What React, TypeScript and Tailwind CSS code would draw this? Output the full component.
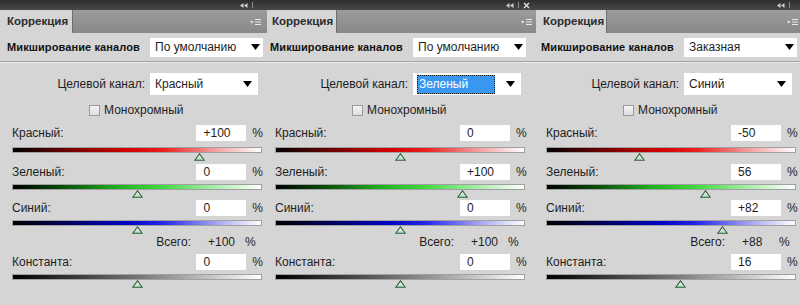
import React from "react";

type Kind = "red" | "green" | "blue" | "gray";

type PanelProps = {
  width: string;
  tabShift: string;
  preset: string;
  target: string;
  highlight?: boolean;
  red: number;
  green: number;
  blue: number;
  labels: [string, string, string, string];
  total: string;
  constant: number;
  close?: boolean;
};

const tracks: Record<Kind, string> = {
  red: "bg-[linear-gradient(to_right,#000_0%,#6e0000_22%,#cc0000_44%,#ea1c1c_60%,#f3a2a2_82%,#ffffff_100%)]",
  green: "bg-[linear-gradient(to_right,#000_0%,#0b560b_22%,#1eb01e_42%,#3fdb3f_60%,#b6efb6_84%,#ffffff_100%)]",
  blue: "bg-[linear-gradient(to_right,#000_0%,#00005c_22%,#0000c4_45%,#2222ea_60%,#b0b0f4_84%,#ffffff_100%)]",
  gray: "bg-[linear-gradient(to_right,#000_0%,#2e2e2e_20%,#747474_50%,#b8b8b8_75%,#ffffff_100%)]",
};

function Arrow() {
  return (
    <svg width="9" height="6" viewBox="0 0 9 6">
      <polygon points="0,0 9,0 4.5,6" fill="#000" />
    </svg>
  );
}

function Thumb({ value }: { value: number }) {
  // track spans 249px, range -200..200
  const left = ((value + 200) / 400) * 249 - 5;
  return (
    <div className="relative h-[8px] w-[250px]">
      <svg className="absolute top-0" style={{ left }} width="11" height="8" viewBox="0 0 11 8">
        <polygon points="5.5,0.8 10.2,7.3 0.8,7.3" fill="#d3ead6" stroke="#2f5a3c" strokeWidth="1.1" />
        <line x1="2.5" y1="6.3" x2="8.5" y2="6.3" stroke="#86c294" strokeWidth="1" />
      </svg>
    </div>
  );
}

function Track({ kind }: { kind: Kind }) {
  return <div className={`h-[6px] w-[250px] border border-[#a0a0a0] ${tracks[kind]}`} />;
}

function ValueRow({ label, value, mt }: { label: string; value: string; mt: string }) {
  return (
    <div className={`flex h-[16px] items-center ${mt}`}>
      <div className="w-[185px] text-[12px] text-[#1e1e1e]">{label}</div>
      <div className="flex h-[16px] w-[50px] items-center bg-white pl-[7px] text-[12px] text-[#1e1e1e]">{value}</div>
      <div className="ml-[6px] text-[12px] text-[#1e1e1e]">%</div>
    </div>
  );
}

function Panel(p: PanelProps) {
  return (
    <div className={`flex shrink-0 flex-col bg-[#d5d5d5] ${p.width}`}>
      <div className="flex h-[10px] items-center justify-end gap-[4px] bg-[linear-gradient(#2e2e2e,#484848)] pr-[2px]">
        <svg width="8" height="5" viewBox="0 0 8 5">
          <polygon points="0,2.5 3.5,0 3.5,5" fill="#cfcfcf" />
          <polygon points="4,2.5 7.5,0 7.5,5" fill="#cfcfcf" />
        </svg>
        <div className="h-[6px] w-px bg-[#8a8a8a]" />
        {p.close ? (
          <svg width="7" height="7" viewBox="0 0 7 7" className="mr-[2px]">
            <path d="M1 1 L6 6 M6 1 L1 6" stroke="#e0e0e0" strokeWidth="1.4" />
          </svg>
        ) : (
          <div className="w-[4px]" />
        )}
      </div>
      <div className="flex h-[23px] items-stretch bg-[linear-gradient(#9c9c9c,#888888)]">
        <div className={`flex items-center border-r border-[#6f6f6f] bg-[#d5d5d5] ${p.tabShift}`}>
          <span className="text-[11.5px] font-bold text-[#2b2b2b]">Коррекция</span>
        </div>
        <div className="flex flex-1 items-center justify-end pr-[2px]">
          <svg width="11" height="8" viewBox="0 0 11 8">
            <polygon points="0,3 3.5,3 1.75,5.5" fill="#e8e8e8" />
            <path d="M5 1.5 H11 M5 4 H11 M5 6.5 H11" stroke="#e8e8e8" strokeWidth="1" />
          </svg>
        </div>
      </div>
      <div className="flex h-[28px] items-center">
        <div className="w-[150px] pl-[7px] text-[11px] font-bold tracking-[0.1px] text-[#111]">Микширование каналов</div>
        <div className="flex h-[19px] w-[113px] items-center justify-between bg-white pl-[5px] pr-[3px] text-[12px] text-[#1e1e1e]">
          <span>{p.preset}</span>
          <Arrow />
        </div>
      </div>
      <div className="h-px bg-[#a2a2a2]" />
      <div className="h-px bg-[#ececec]" />

      <div className="mt-[10px] flex h-[22px] items-center">
        <div className="w-[147px] pr-[2px] text-right text-[12px] text-[#1e1e1e]">Целевой канал:</div>
        <div className="ml-[3px] flex h-[22px] w-[108px] items-center justify-between bg-white pl-[4px] pr-[6px] text-[12px]">
          {p.highlight ? (
            <span className="flex h-[19px] w-[78px] items-center border border-dotted border-[#1a1a1a] bg-[#3897f0] pl-px text-white">
              {p.target}
            </span>
          ) : (
            <span className="pl-px text-[#1e1e1e]">{p.target}</span>
          )}
          <Arrow />
        </div>
      </div>

      <div className="mt-[8px] flex h-[14px] items-center pl-[89px]">
        <div className="h-[11px] w-[11px] border border-[#9a9a9a] bg-[linear-gradient(#f4f4f4,#dedede)]" />
        <span className="ml-[4px] text-[12px] text-[#1e1e1e]">Монохромный</span>
      </div>

      <div className="pl-[12px]">
        <ValueRow label="Красный:" value={p.labels[0]} mt="mt-[8px]" />
        <div className="mt-[6px]">
          <Track kind="red" />
        </div>
        <Thumb value={p.red} />

        <ValueRow label="Зеленый:" value={p.labels[1]} mt="mt-[3px]" />
        <div className="mt-[4px]">
          <Track kind="green" />
        </div>
        <Thumb value={p.green} />

        <ValueRow label="Синий:" value={p.labels[2]} mt="mt-[2px]" />
        <div className="mt-[4px]">
          <Track kind="blue" />
        </div>
        <Thumb value={p.blue} />

        <div className="flex h-[16px] items-center text-[12px] text-[#1e1e1e]">
          <div className="w-[179px] text-right">Всего:</div>
          <div className="ml-[17px] w-[37px]">{p.total}</div>
          <div>%</div>
        </div>

        <ValueRow label="Константа:" value={p.labels[3]} mt="mt-[4px]" />
        <div className="mt-[4px]">
          <Track kind="gray" />
        </div>
        <Thumb value={p.constant} />
      </div>
      <div className="flex-1" />
    </div>
  );
}

export default function App() {
  return (
    <div className="flex h-[305px] w-[800px] overflow-hidden bg-[#d5d5d5] font-['Liberation_Sans',Arial,sans-serif]">
      <Panel
        width="w-[263px]"
        tabShift="w-[73px] pl-[7px]"
        preset="По умолчанию"
        target="Красный"
        red={100}
        green={0}
        blue={0}
        labels={["+100", "0", "0", "0"]}
        total="+100"
        constant={0}
      />
      <Panel
        width="w-[271px]"
        tabShift="ml-[4px] w-[70px] pl-[5px]"
        preset="По умолчанию"
        target="Зеленый"
        highlight
        red={0}
        green={100}
        blue={0}
        labels={["0", "+100", "0", "0"]}
        total="+100"
        constant={0}
        close
      />
      <Panel
        width="w-[266px]"
        tabShift="ml-[2px] w-[71px] pl-[7px]"
        preset="Заказная"
        target="Синий"
        red={-50}
        green={56}
        blue={82}
        labels={["-50", "56", "+82", "16"]}
        total="+88"
        constant={16}
      />
    </div>
  );
}
